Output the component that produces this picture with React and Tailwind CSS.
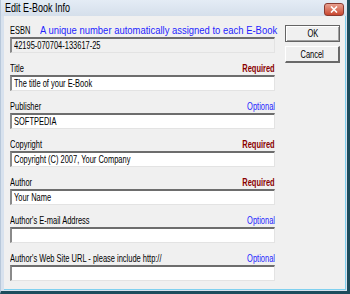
import React from 'react';

const FONT = { fontFamily: '"Liberation Sans", Arial, sans-serif' };

// squeezed text, the reference is narrower than any installed font
function T({ children, className = '', origin = 'origin-left' }) {
  return (
    <span className={`inline-block whitespace-nowrap scale-x-[0.68] ${origin} ${className}`}>
      {children}
    </span>
  );
}

function Field({ value = '', readOnly }) {
  return (
    <div
      className={`h-[16px] w-[265px] border-t-2 border-l-2 border-t-[#6d6d6d] border-l-[#8a8a8a] border-r border-b border-r-[#e3e3e3] border-b-[#e3e3e3] flex items-center pl-[2px] text-[11px] text-black ${
        readOnly ? 'bg-[#f0f0f0]' : 'bg-white'
      }`}
    >
      <T>{value}</T>
    </div>
  );
}

function Group({ label, note, required, value }) {
  return (
    <div className="flex flex-col gap-[1px]">
      <div className="h-[12px] flex items-center justify-between w-[265px] text-[11px] leading-[12px]">
        <T className="text-black">{label}</T>
        {note && (
          <T
            origin="origin-right"
            className={required ? 'text-[#8a0000] font-bold' : 'text-[#1f1fff]'}
          >
            {note}
          </T>
        )}
      </div>
      <Field value={value} />
    </div>
  );
}

function Button({ children, isDefault }) {
  return (
    <div
      className={`h-[17px] w-[55px] bg-[#f0f0f0] flex items-center justify-center text-[11px] text-black ${
        isDefault
          ? 'border border-[#646464] shadow-[inset_1px_1px_0_#ffffff,inset_-1px_-1px_0_#a0a0a0]'
          : 'border-t border-l border-t-white border-l-white border-r-2 border-b-2 border-r-[#696969] border-b-[#696969]'
      }`}
    >
      <T origin="origin-center">{children}</T>
    </div>
  );
}

export default function App() {
  return (
    <div
      style={FONT}
      className="w-[350px] h-[294px] flex flex-col bg-[#d8e2ee] border-r-[3px] border-b-[3px] border-r-[#1d4c5c] border-b-[#1d4c5c] border-l border-l-[#b8c8da] overflow-hidden"
    >
      <div className="h-[16px] flex items-center justify-between pl-[4px] pr-[3px] bg-gradient-to-b from-[#e4ecf5] to-[#d5dfeb]">
        <span className="inline-block text-[12px] text-black whitespace-nowrap scale-x-[0.75] origin-left">
          Edit E-Book Info
        </span>
        <div className="mt-[3px] h-[13px] w-[20px] rounded-[3px] bg-gradient-to-b from-[#e8a090] to-[#c8452e] border border-[#8a3a30] flex items-center justify-center">
          <svg width="8" height="7" viewBox="0 0 8 7">
            <path d="M1 0.5 L7 6.5 M7 0.5 L1 6.5" stroke="#ffffff" strokeWidth="1.6" />
          </svg>
        </div>
      </div>

      <div className="flex-1 ml-[3px] mr-[1px] mb-[1px] bg-[#f0f0f0] border-b border-r border-b-[#7fd0ef] border-r-[#7fd0ef] flex">
        <div className="pl-[6px] pt-[8px] flex flex-col gap-[9px]">
          <div className="flex flex-col gap-[1px]">
            <div className="h-[12px] flex items-center w-[265px] text-[11px] leading-[12px]">
              <span className="inline-block w-[70px]">
                <T className="text-black">ESBN</T>
              </span>
              <span className="inline-block whitespace-nowrap scale-x-[0.86] origin-left text-[#1f1fff]">
                A unique number automatically assigned to each E-Book
              </span>
            </div>
            <Field value="42195-070704-133617-25" readOnly />
          </div>
          <Group label="Title" note="Required" required value="The title of your E-Book" />
          <Group label="Publisher" note="Optional" value="SOFTPEDIA" />
          <Group label="Copyright" note="Required" required value="Copyright (C) 2007, Your Company" />
          <Group label="Author" note="Required" required value="Your Name" />
          <Group label="Author's E-mail Address" note="Optional" value="" />
          <Group label="Author's Web Site URL - please include http://" note="Optional" value="" />
        </div>
        <div className="ml-[10px] pt-[9px] flex flex-col gap-[4px]">
          <Button isDefault>OK</Button>
          <Button>Cancel</Button>
        </div>
      </div>
    </div>
  );
}
